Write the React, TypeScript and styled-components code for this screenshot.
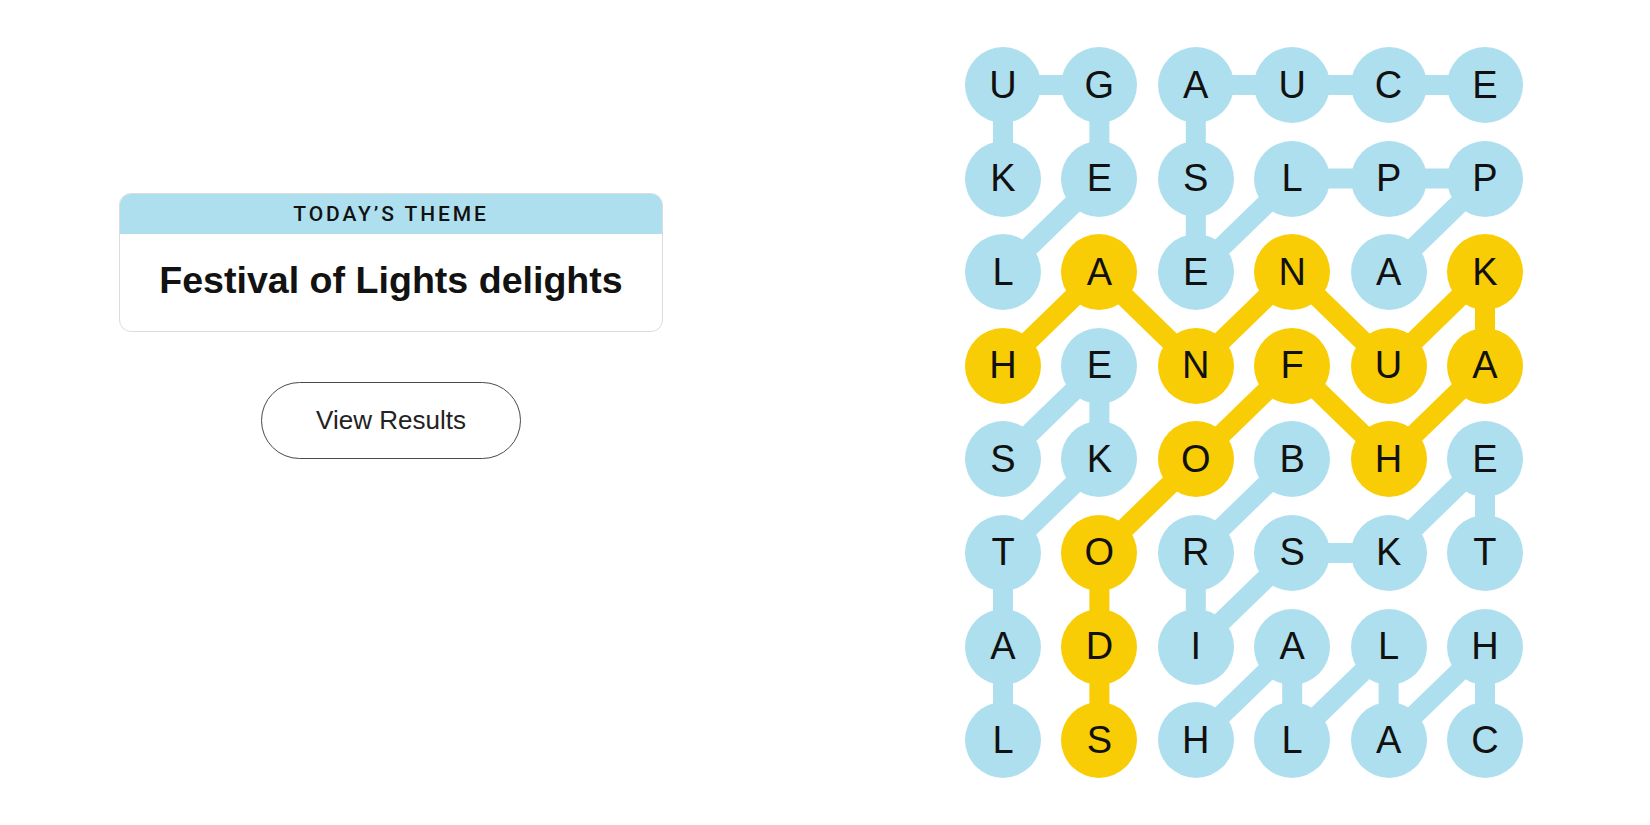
import React from 'react';
import styled, { createGlobalStyle } from 'styled-components';

const GlobalStyle = createGlobalStyle`
  html, body { margin: 0; padding: 0; background: #fff; }
  body { font-family: "Liberation Sans", Arial, sans-serif; color: #121212; }
`;

const BLUE = '#aedfee';
const YELLOW = '#f9cd05';
const CELL = 76;
const COL_STEP = 96.4;
const ROW_STEP = 93.6;

const Page = styled.div`
  display: flex;
  width: 1650px;
  height: 825px;
  overflow: hidden;
`;
const Side = styled.section`
  width: 782px;
  padding-top: 193px;
  display: flex;
  flex-direction: column;
  align-items: center;
`;
const ThemeCard = styled.div`
  width: 544px;
  box-sizing: border-box;
  border: 1px solid #dcdcdc;
  border-radius: 12px;
  overflow: hidden;
  background: #fff;
`;
const ThemeHead = styled.div`
  height: 40px;
  background: ${BLUE};
  display: flex;
  align-items: center;
  justify-content: center;
  font-family: Roboto, "Liberation Sans", Arial, sans-serif;
  font-weight: 500;
  font-size: 21px;
  letter-spacing: 2.9px;
  color: #121212;
`;
const ThemeTitle = styled.h1`
  margin: 0;
  height: 97px;
  display: flex;
  align-items: center;
  justify-content: center;
  padding-bottom: 4px;
  box-sizing: border-box;
  font-size: 37.6px;
  font-weight: 700;
  color: #121212;
`;
const ResultsButton = styled.button`
  margin-top: 50px;
  width: 260px;
  height: 77px;
  border: 1px solid #4a4a4a;
  border-radius: 40px;
  background: #fff;
  font-family: "Liberation Sans", Arial, sans-serif;
  font-size: 26px;
  color: #222;
  cursor: pointer;
`;
const BoardArea = styled.section`
  padding: 47px 0 0 183px;
`;
const Board = styled.div`
  position: relative;
  display: grid;
  grid-template-columns: repeat(6, ${CELL}px);
  grid-auto-rows: ${CELL}px;
  column-gap: ${COL_STEP - CELL}px;
  row-gap: ${ROW_STEP - CELL}px;
`;
const Lines = styled.svg`
  position: absolute;
  left: 0;
  top: 0;
  width: 100%;
  height: 100%;
  overflow: visible;
`;
const Letter = styled.button<{ $spangram?: boolean }>`
  position: relative;
  width: ${CELL}px;
  height: ${CELL}px;
  border: none;
  border-radius: 50%;
  padding: 0;
  background: ${p => (p.$spangram ? YELLOW : BLUE)};
  font-family: "Liberation Sans", Arial, sans-serif;
  font-size: 38px;
  color: #111;
  display: flex;
  align-items: center;
  justify-content: center;
`;

const grid = [
  'UGAUCE',
  'KESLPP',
  'LAENAK',
  'HENFUA',
  'SKOBHE',
  'TORSKT',
  'ADIALH',
  'LSHLAC',
];

type Cell = [number, number];
const words: { cells: Cell[]; spangram?: boolean }[] = [
  { cells: [[1, 0], [0, 0], [0, 1], [1, 1], [2, 0]] },
  { cells: [[2, 4], [1, 5], [1, 4], [1, 3], [2, 2], [1, 2], [0, 2], [0, 3], [0, 4], [0, 5]] },
  { cells: [[7, 0], [6, 0], [5, 0], [4, 1], [3, 1], [4, 0]] },
  { cells: [[4, 3], [5, 2], [6, 2], [5, 3], [5, 4], [4, 5], [5, 5]] },
  { cells: [[7, 5], [6, 5], [7, 4], [6, 4], [7, 3], [6, 3], [7, 2]] },
  {
    cells: [[3, 0], [2, 1], [3, 2], [2, 3], [3, 4], [2, 5], [3, 5], [4, 4], [3, 3], [4, 2], [5, 1], [6, 1], [7, 1]],
    spangram: true,
  },
];

const spanSet = new Set(words.filter(w => w.spangram).flatMap(w => w.cells.map(([r, c]) => `${r}-${c}`)));

const cx = (c: number) => CELL / 2 + c * COL_STEP;
const cy = (r: number) => CELL / 2 + r * ROW_STEP;

const App: React.FC = () => {
  return (
    <Page>
      <GlobalStyle />
      <Side>
        <ThemeCard>
          <ThemeHead>TODAY’S THEME</ThemeHead>
          <ThemeTitle>Festival of Lights delights</ThemeTitle>
        </ThemeCard>
        <ResultsButton type="button">View Results</ResultsButton>
      </Side>
      <BoardArea>
        <Board>
          <Lines>
            {words.map((w, i) => (
              <polyline
                key={i}
                points={w.cells.map(([r, c]) => `${cx(c)},${cy(r)}`).join(' ')}
                fill="none"
                stroke={w.spangram ? YELLOW : BLUE}
                strokeWidth={20}
                strokeLinejoin="round"
              />
            ))}
          </Lines>
          {grid.map((row, r) =>
            row.split('').map((ch, c) => (
              <Letter key={`${r}-${c}`} type="button" $spangram={spanSet.has(`${r}-${c}`)}>
                {ch}
              </Letter>
            ))
          )}
        </Board>
      </BoardArea>
    </Page>
  );
};

export default App;
